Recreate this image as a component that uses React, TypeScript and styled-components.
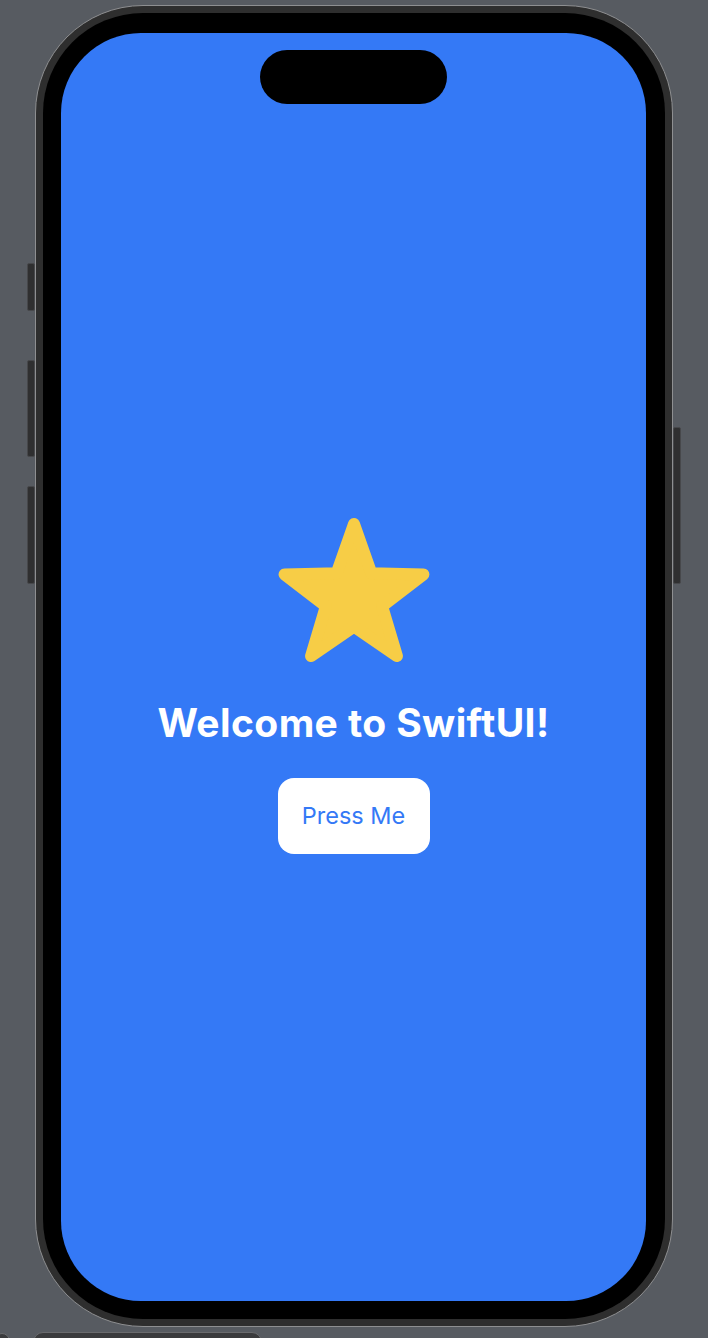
import React from "react";
import styled, { createGlobalStyle } from "styled-components";

const GlobalStyle = createGlobalStyle`
  html, body {
    margin: 0;
    padding: 0;
    background: #575b61;
    font-family: Inter, "Noto Sans", sans-serif;
  }
  * { box-sizing: border-box; }
`;

const Page = styled.div`
  width: 708px;
  height: 1338px;
  overflow: hidden;
  display: flex;
  flex-direction: column;
  padding-top: 5px;
  gap: 5px;
`;

const DeviceRow = styled.div`
  display: flex;
  flex-direction: row;
  padding-left: 27px;
  flex-shrink: 0;
`;

const Rail = styled.div`
  width: 8px;
  display: flex;
  flex-direction: column;
  flex-shrink: 0;
`;

const SideButton = styled.div<{ $before: number; $height: number }>`
  width: 8px;
  margin-top: ${(p) => p.$before}px;
  height: ${(p) => p.$height}px;
  background: #2f2f30;
  border: 1px solid #47484b;
  border-radius: 2px;
`;

const Phone = styled.div`
  width: 638px;
  height: 1322px;
  flex-shrink: 0;
  border: 1px solid #8e8f91;
  border-radius: 108px;
  background: #2e2e2e;
  padding: 7px;
  display: flex;
`;

const Bezel = styled.div`
  flex: 1;
  background: #000;
  border-radius: 100px;
  padding: 20px 19px 18px 18px;
  display: flex;
`;

const Screen = styled.div`
  flex: 1;
  background: #3479f6;
  border-radius: 80px;
  display: flex;
  flex-direction: column;
  align-items: center;
  overflow: hidden;
`;

const Island = styled.div`
  margin-top: 17px;
  width: 187px;
  height: 54px;
  border-radius: 27px;
  background: #000;
  flex-shrink: 0;
`;

const Content = styled.div`
  flex: 1;
  align-self: stretch;
  display: flex;
  flex-direction: column;
  align-items: center;
  justify-content: center;
  padding-bottom: 35px;
`;

const StarIcon = styled.svg`
  width: 160px;
  height: 160px;
  display: block;
`;

const Title = styled.h1`
  margin: 23px 0 0;
  font-family: Inter, "Noto Sans", sans-serif;
  font-weight: 700;
  font-size: 39px;
  line-height: 45px;
  color: #ffffff;
  letter-spacing: 0.4px;
  white-space: nowrap;
`;

const PressButton = styled.button`
  margin-top: 33px;
  width: 152px;
  height: 76px;
  border: none;
  border-radius: 16px;
  background: #ffffff;
  color: #3479f6;
  font-family: Inter, "Noto Sans", sans-serif;
  font-size: 23.5px;
  font-weight: 400;
  display: flex;
  align-items: center;
  justify-content: center;
  padding: 0;
  cursor: pointer;
`;

const BottomRow = styled.div`
  display: flex;
  flex-direction: row;
  align-items: flex-start;
  gap: 23px;
  margin-left: -6px;
`;

const Dot = styled.div`
  width: 16px;
  height: 16px;
  margin-top: 1px;
  border-radius: 50%;
  background: #3a3b3d;
  border: 1px solid #6a6b6e;
  flex-shrink: 0;
`;

const Dock = styled.div`
  width: 229px;
  height: 20px;
  border: 1px solid #6a6b6e;
  border-radius: 10px 10px 0 0;
  background: #3a3b3d;
`;

const starPoints = (() => {
  const pts: string[] = [];
  for (let i = 0; i < 10; i++) {
    const ang = ((-90 + i * 36) * Math.PI) / 180;
    const r = i % 2 === 0 ? 73 : 29.5;
    pts.push(`${(80 + r * Math.cos(ang)).toFixed(2)},${(80 + r * Math.sin(ang)).toFixed(2)}`);
  }
  return pts.join(" ");
})();

const leftButtons = [
  { before: 258, height: 48 },
  { before: 49, height: 97 },
  { before: 29, height: 98 },
];

export default function App() {
  return (
    <>
      <GlobalStyle />
      <Page>
        <DeviceRow>
          <Rail>
            {leftButtons.map((b, i) => (
              <SideButton key={i} $before={b.before} $height={b.height} />
            ))}
          </Rail>
          <Phone>
            <Bezel>
              <Screen>
                <Island />
                <Content>
                  <StarIcon viewBox="0 0 160 160" aria-hidden="true">
                    <polygon
                      points={starPoints}
                      fill="#f7cd46"
                      stroke="#f7cd46"
                      strokeWidth={12}
                      strokeLinejoin="round"
                    />
                  </StarIcon>
                  <Title>Welcome to SwiftUI!</Title>
                  <PressButton>Press Me</PressButton>
                </Content>
              </Screen>
            </Bezel>
          </Phone>
          <Rail>
            <SideButton $before={422} $height={157} />
          </Rail>
        </DeviceRow>
        <BottomRow>
          <Dot />
          <Dock />
        </BottomRow>
      </Page>
    </>
  );
}
